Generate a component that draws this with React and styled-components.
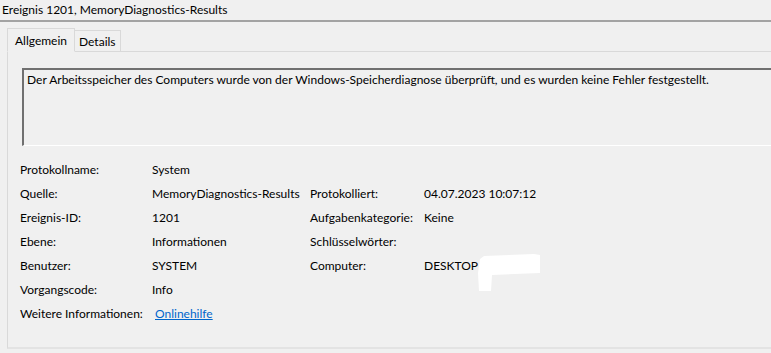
import { createGlobalStyle } from "styled-components";
import styled from "styled-components";

const GlobalStyle = createGlobalStyle`
  html, body {
    margin: 0;
    padding: 0;
    background: #f0f0f0;
    overflow: hidden;
  }
  body {
    font-family: Lato, "Noto Sans", sans-serif;
    font-size: 12px;
    color: #000;
  }
`;

const Window = styled.div`
  width: 771px;
  height: 353px;
  overflow: hidden;
  background: #f0f0f0;
`;

const TitleBar = styled.div`
  height: 20px;
  line-height: 20px;
  padding-left: 2px;
  border-bottom: 2px solid #a3a3a3;
  white-space: nowrap;
`;

const TabStrip = styled.div`
  display: flex;
  align-items: flex-end;
  height: 29px;
  margin-left: 7px;
`;

const Tab = styled.div`
  box-sizing: border-box;
  height: ${(p) => (p.$active ? "24px" : "21px")};
  padding: 0 ${(p) => (p.$active ? "7px" : "4px")};
  line-height: ${(p) => (p.$active ? "23px" : "21px")};
  border: 1px solid #d9d9d9;
  border-bottom: ${(p) => (p.$active ? "1px solid #f0f0f0" : "none")};
  margin-bottom: ${(p) => (p.$active ? "-1px" : "0")};
  background: #f0f0f0;
  position: relative;
  z-index: ${(p) => (p.$active ? 1 : 0)};
  & + & {
    border-left: none;
  }
`;

const Panel = styled.div`
  box-sizing: border-box;
  margin-left: 7px;
  margin-right: -20px;
  height: 298px;
  border: 1px solid #d9d9d9;
  border-bottom: 2px solid #e3e3e3;
  padding: 16px 0 0 14px;
`;

const Description = styled.div`
  box-sizing: border-box;
  height: 78px;
  padding: 2px 3px;
  border-top: 2px solid #707070;
  border-left: 2px solid #707070;
  border-bottom: 1px solid #ffffff;
  white-space: nowrap;
  line-height: 16px;
`;

const Fields = styled.div`
  display: grid;
  grid-template-columns: 132px 158px 114px 1fr;
  grid-auto-rows: 24px;
  margin: 12px 0 0 -2px;
  line-height: 24px;
  white-space: nowrap;
`;

const Cell = styled.div`
  position: relative;
  padding-left: ${(p) => (p.$indent ? "3px" : "0")};
`;

const HelpLink = styled.a`
  color: #0066cc;
  text-decoration: underline;
  cursor: pointer;
`;

// white scribble that hides the rest of the computer name
const Redaction = styled.svg`
  position: absolute;
  top: -1px;
  margin-left: 0;
`;

const rows = [
  ["Protokollname:", "System", "", ""],
  ["Quelle:", "MemoryDiagnostics-Results", "Protokolliert:", "04.07.2023 10:07:12"],
  ["Ereignis-ID:", "1201", "Aufgabenkategorie:", "Keine"],
  ["Ebene:", "Informationen", "Schlüsselwörter:", ""],
  ["Benutzer:", "SYSTEM", "Computer:", "DESKTOP"],
  ["Vorgangscode:", "Info", "", ""],
];

export default function App() {
  return (
    <Window>
      <GlobalStyle />
      <TitleBar>Ereignis 1201, MemoryDiagnostics-Results</TitleBar>
      <TabStrip>
        <Tab $active>Allgemein</Tab>
        <Tab>Details</Tab>
      </TabStrip>
      <Panel>
        <Description>
          Der Arbeitsspeicher des Computers wurde von der Windows-Speicherdiagnose
          überprüft, und es wurden keine Fehler festgestellt.
        </Description>
        <Fields>
          {rows.map(([l1, v1, l2, v2]) => (
            <>
              <Cell key={l1}>{l1}</Cell>
              <Cell>{v1}</Cell>
              <Cell>{l2}</Cell>
              <Cell>
                {v2}
                {v2 === "DESKTOP" && (
                  <Redaction width="62" height="38" viewBox="0 0 62 38">
                    <path
                      d="M6 3 L56 1 L62 2 L62 20 L14 22 L13 38 L1 38 L0 20 L2 6 Z"
                      fill="#ffffff"
                    />
                  </Redaction>
                )}
              </Cell>
            </>
          ))}
          <Cell>Weitere Informationen:</Cell>
          <Cell $indent>
            <HelpLink>Onlinehilfe</HelpLink>
          </Cell>
        </Fields>
      </Panel>
    </Window>
  );
}
